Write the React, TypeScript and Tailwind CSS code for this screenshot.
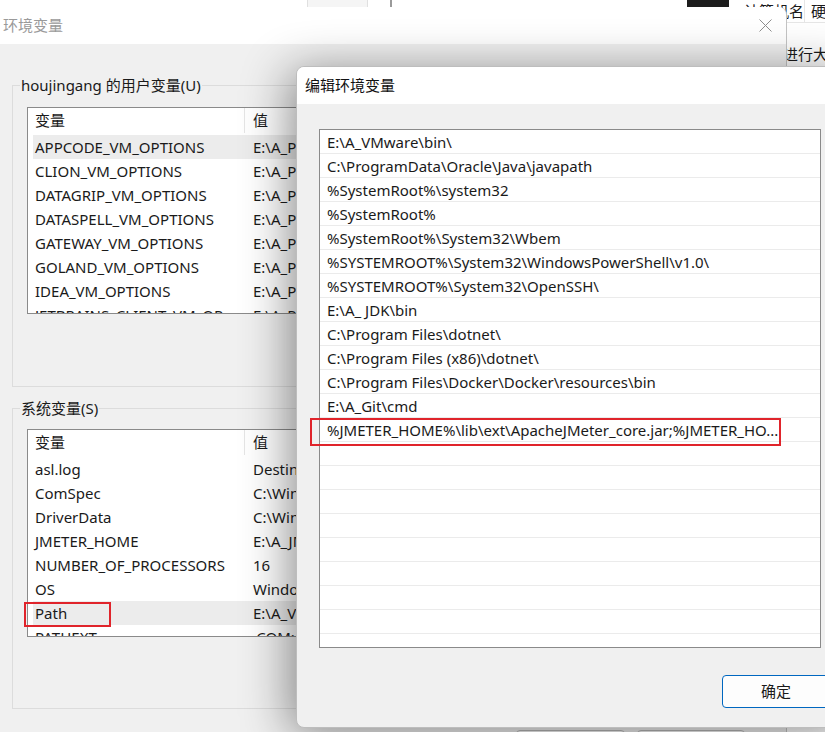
import React from 'react';

const font = { fontFamily: '"Noto Sans", "Noto Sans CJK SC", sans-serif' };

const userVars: [string, string][] = [
  ['APPCODE_VM_OPTIONS', 'E:\\A_Program Files\\JetBrains\\appcode.vmoptions'],
  ['CLION_VM_OPTIONS', 'E:\\A_Program Files\\JetBrains\\clion.vmoptions'],
  ['DATAGRIP_VM_OPTIONS', 'E:\\A_Program Files\\JetBrains\\datagrip.vmoptions'],
  ['DATASPELL_VM_OPTIONS', 'E:\\A_Program Files\\JetBrains\\dataspell.vmoptions'],
  ['GATEWAY_VM_OPTIONS', 'E:\\A_Program Files\\JetBrains\\gateway.vmoptions'],
  ['GOLAND_VM_OPTIONS', 'E:\\A_Program Files\\JetBrains\\goland.vmoptions'],
  ['IDEA_VM_OPTIONS', 'E:\\A_Program Files\\JetBrains\\idea.vmoptions'],
  ['JETBRAINS_CLIENT_VM_OP', 'E:\\A_Program Files\\JetBrains\\client.vmoptions'],
];

const sysVars: [string, string][] = [
  ['asl.log', 'Destination=file'],
  ['ComSpec', 'C:\\Windows\\system32\\cmd.exe'],
  ['DriverData', 'C:\\Windows\\System32\\Drivers\\DriverData'],
  ['JMETER_HOME', 'E:\\A_JMeter\\apache-jmeter'],
  ['NUMBER_OF_PROCESSORS', '16'],
  ['OS', 'Windows_NT'],
  ['Path', 'E:\\A_VMware\\bin\\;C:\\ProgramData'],
  ['PATHEXT', '.COM;.EXE;.BAT;.CMD'],
];

const paths = [
  'E:\\A_VMware\\bin\\',
  'C:\\ProgramData\\Oracle\\Java\\javapath',
  '%SystemRoot%\\system32',
  '%SystemRoot%',
  '%SystemRoot%\\System32\\Wbem',
  '%SYSTEMROOT%\\System32\\WindowsPowerShell\\v1.0\\',
  '%SYSTEMROOT%\\System32\\OpenSSH\\',
  'E:\\A_ JDK\\bin',
  'C:\\Program Files\\dotnet\\',
  'C:\\Program Files (x86)\\dotnet\\',
  'C:\\Program Files\\Docker\\Docker\\resources\\bin',
  'E:\\A_Git\\cmd',
  '%JMETER_HOME%\\lib\\ext\\ApacheJMeter_core.jar;%JMETER_HO...',
];

function VarList({ rows, selected, height }: { rows: [string, string][]; selected: number; height: string }) {
  return (
    <div className={`${height} border border-[#8a8a8a] bg-white overflow-hidden`}>
      <div className="flex h-[27px] items-end pb-[2px]">
        <div className="w-[217px] pl-[7px] border-r border-[#e5e5e5] h-[25px] leading-[25px]">变量</div>
        <div className="pl-[8px] leading-[25px]">值</div>
      </div>
      {rows.map(([name, value], i) => (
        <div
          key={name}
          className={`ml-[5px] flex h-[24px] items-center whitespace-nowrap ${i === selected ? 'bg-[#ececec]' : ''}`}
        >
          <div className="w-[212px] pl-[2px] overflow-hidden">{name}</div>
          <div className="pl-[8px]">{value}</div>
        </div>
      ))}
    </div>
  );
}

export default function App() {
  const emptyRows = Array.from({ length: 9 });

  return (
    <div className="relative w-[825px] h-[732px] overflow-hidden bg-white text-[15px] text-[#1a1a1a]" style={font}>
      {/* window behind */}
      <div className="absolute inset-0">
        <div className="flex h-[7px]">
          <div className="w-[308px] border-r border-[#e0e0e0]" />
          <div className="w-[60px] bg-[#f5f5f5] border-r border-[#e0e0e0]" />
          <div className="w-[24px] border-r-2 border-[#9a9a9a]" />
          <div className="w-[295px]" />
          <div className="w-[42px] bg-[#1c1c1c]" />
        </div>
        <div className="ml-[744px] -mt-[7px] w-[90px] h-[23px] border-b border-[#e6e6e6] flex items-center whitespace-nowrap">
          <span className="w-[68px]">计算机名</span>
          <span className="border-l border-[#e6e6e6] pl-[6px]">硬件</span>
        </div>
        <div className="ml-[768px] mt-[20px] whitespace-nowrap">可进行大更改</div>
      </div>

      {/* 环境变量 */}
      <div className="absolute left-0 top-[7px] w-[787px] h-[740px] bg-[#f0f0f0] rounded-tr-[8px] border-r border-[#c4c4c4]">
        <div className="h-[37px] bg-white rounded-tr-[8px] flex items-center justify-between pl-[3px] pr-[14px]">
          <span className="text-[#9a9a9a]">环境变量</span>
          <svg width="13" height="13" viewBox="0 0 13 13">
            <path d="M0.5 0.5 L12.5 12.5 M12.5 0.5 L0.5 12.5" stroke="#8f8f8f" strokeWidth="1" />
          </svg>
        </div>
        <fieldset className="mt-[31px] mx-[12px] h-[312px] border border-[#dcdcdc] px-[14px]">
          <legend className="-ml-[7px] px-[1px] leading-[20px]">houjingang 的用户变量(U)</legend>
          <div className="mt-[12px]">
            <VarList rows={userVars} selected={0} height="h-[207px]" />
          </div>
        </fieldset>
        <fieldset className="mt-[11px] mx-[12px] h-[311px] border border-[#dcdcdc] px-[14px]">
          <legend className="-ml-[7px] px-[1px] leading-[20px]">系统变量(S)</legend>
          <div className="mt-[11px]">
            <VarList rows={sysVars} selected={6} height="h-[208px]" />
          </div>
        </fieldset>
        <div className="mt-[21px] flex justify-end gap-[12px] pr-[41px]">
          <div className="w-[109px] h-[32px] rounded-[4px] border border-[#b8b8b8] bg-[#fdfdfd]" />
          <div className="w-[108px] h-[32px] rounded-[4px] border border-[#b8b8b8] bg-[#fdfdfd]" />
        </div>
        <div className="absolute left-[24px] top-[595px] w-[87px] h-[25px] border-2 border-[#e0242b]" />
      </div>

      {/* 编辑环境变量 */}
      <div className="absolute left-[296px] top-[66px] w-[560px] h-[662px] rounded-[8px] overflow-hidden bg-[#f0f0f0] border border-[#bdbdbd] shadow-[-6px_6px_48px_rgba(0,0,0,0.45)]">
        <div className="h-[37px] bg-white flex items-center pl-[8px] text-[#111]">编辑环境变量</div>
        <div className="relative pt-[25px] pl-[22px]">
          <div className="w-[502px] h-[519px] border border-[#8a8a8a] bg-white overflow-hidden">
            {paths.map((p) => (
              <div key={p} className="h-[24px] border-b border-[#ebebeb] pl-[7px] pt-[1px] flex items-center whitespace-nowrap">
                {p}
              </div>
            ))}
            {emptyRows.map((_, i) => (
              <div key={i} className="h-[24px] border-b border-[#ebebeb]" />
            ))}
          </div>
          <div className="absolute left-[13px] top-[314px] w-[471px] h-[28px] border-2 border-[#e0242b]" />
          <div className="mt-[27px] ml-[403px] w-[108px] h-[33px] rounded-[4px] border border-[#0067c0] bg-[#fdfdfd] flex items-center justify-center">
            确定
          </div>
        </div>
      </div>
    </div>
  );
}
